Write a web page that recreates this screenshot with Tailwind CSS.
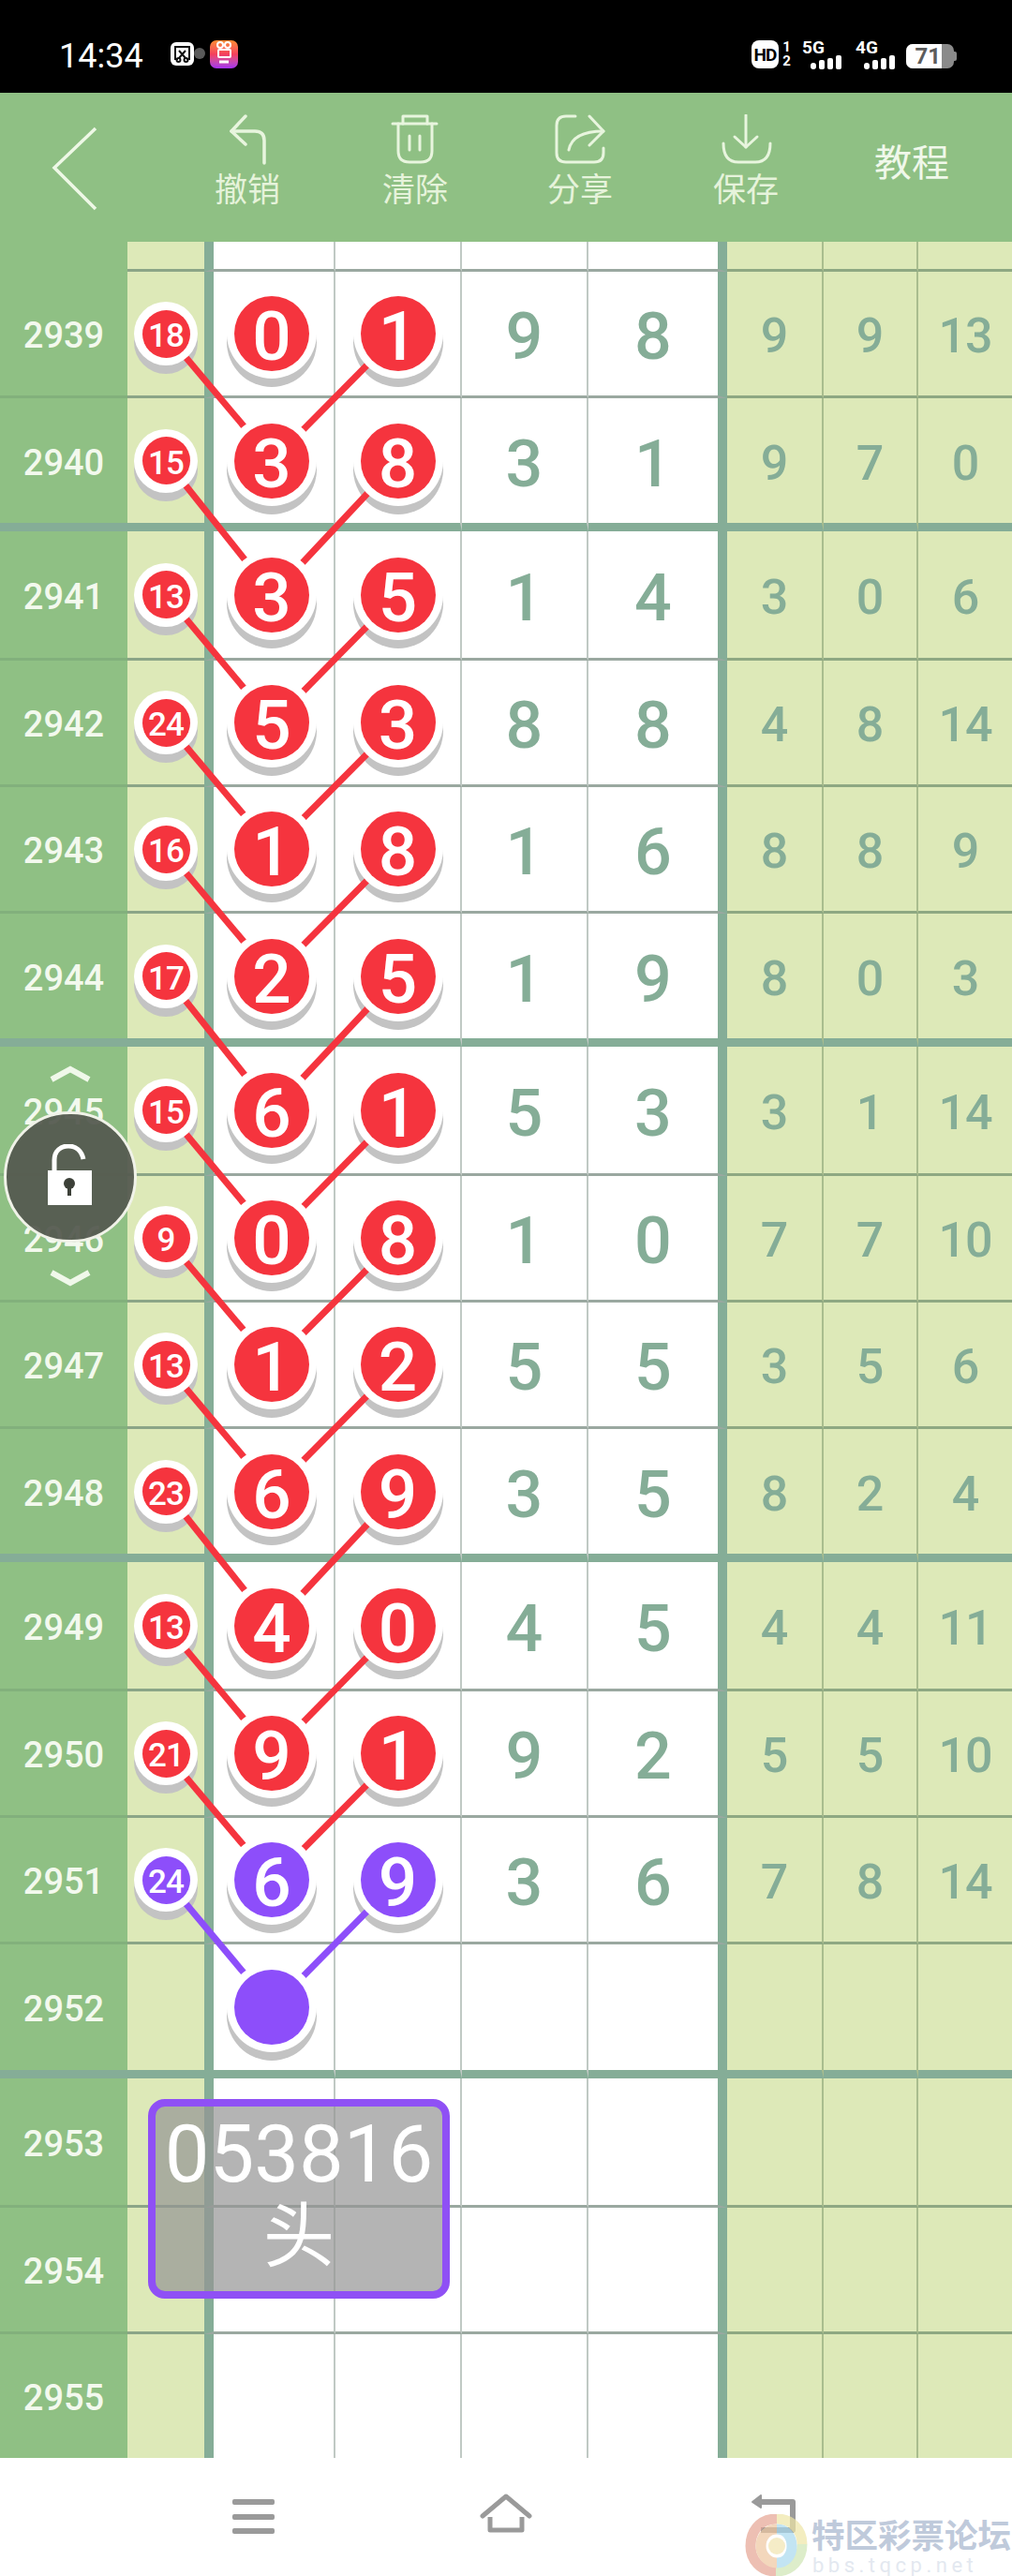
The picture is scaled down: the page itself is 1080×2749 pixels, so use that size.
<!DOCTYPE html>
<html lang="zh">
<head>
  <meta charset="UTF-8" />
  <meta name="viewport" content="width=device-width, initial-scale=1.0"/>
  <title>走势图</title>
  <script src="https://cdn.jsdelivr.net/npm/@tailwindcss/browser@4"></script>
</head>
<body class="bg-white">
<div class="relative w-[1080px] h-[2749px] overflow-hidden bg-white font-['Roboto','Noto_Sans_CJK_SC',sans-serif]">

  <!-- status bar -->
  <div class="flex h-[99px] items-start bg-black text-white">
    <div class="ml-[63px] mt-[39px] w-[119px] text-[36px] leading-[42px]">14:34</div>
    <div class="mt-[45px] flex h-[25px] w-[25px] items-center justify-center rounded-[6px] bg-white">
      <svg width="19" height="19" viewBox="0 0 19 19" fill="none" stroke="#111" stroke-width="2"><path d="M5 15H2V2h15v13h-3"/><path d="M6 6l7 8M13 6l-7 8"/><circle cx="5.500" cy="16" r="2"/><circle cx="13.500" cy="16" r="2"/></svg>
    </div>
    <div class="mt-[51px] h-[12px] w-[12px] rounded-full bg-[#5a5a5a]"></div>
    <div class="ml-[5px] mt-[43px] flex h-[30px] w-[30px] items-start justify-center rounded-[7px] bg-gradient-to-b from-[#fb8a2e] via-[#f43e5c] to-[#a52cf0]">
      <svg width="22" height="26" viewBox="0 0 22 26" fill="none" stroke="#fff" stroke-width="2"><circle cx="7" cy="5" r="3"/><circle cx="15" cy="5" r="3"/><rect x="5" y="10" width="13" height="8" rx="1"/><path d="M6 23h10" stroke-width="3"/></svg>
    </div>

    <div class="ml-[548px] mt-[43px] flex h-[30px] w-[29px] items-center justify-center rounded-[8px] bg-white text-[19px] font-bold leading-none tracking-[-1px] text-black">HD</div>
    <div class="ml-[3px] mt-[43px] flex w-[11px] flex-col items-center text-[15px] font-bold leading-[15px]"><span>1</span><span>2</span></div>

    <div class="ml-[11px] mt-[42px] w-[44px]">
      <div class="text-[19px] font-bold leading-[17px]">5G</div>
      <div class="flex h-[15px] items-end gap-[3px] pl-[9px]">
        <i class="h-[7px] w-[6px] rounded-[3px] bg-white"></i><i class="h-[10px] w-[6px] rounded-[2px] bg-white"></i><i class="h-[12px] w-[6px] rounded-[2px] bg-white"></i><i class="h-[15px] w-[6px] rounded-[2px] bg-white"></i>
      </div>
    </div>
    <div class="ml-[13px] mt-[42px] w-[46px]">
      <div class="text-[19px] font-bold leading-[17px]">4G</div>
      <div class="flex h-[15px] items-end gap-[3px] pl-[9px]">
        <i class="h-[7px] w-[6px] rounded-[3px] bg-white"></i><i class="h-[10px] w-[6px] rounded-[2px] bg-white"></i><i class="h-[12px] w-[6px] rounded-[2px] bg-white"></i><i class="h-[15px] w-[6px] rounded-[2px] bg-white"></i>
      </div>
    </div>
    <div class="ml-[8px] mt-[47px] flex h-[26px] w-[51px] overflow-hidden rounded-[7px] bg-[#8a8a8a]">
      <div class="flex w-[38px] items-center justify-end bg-white pr-px text-[24px] font-bold leading-none text-[#5c5c5c]">71</div>
    </div>
    <div class="mt-[55px] h-[10px] w-[3px] rounded-r-[2px] bg-[#8a8a8a]"></div>
  </div>

  <!-- header -->
  <div class="flex h-[159px] bg-[#8fc084] text-[#e6f3db]">
    <div class="w-[176px] pl-[54px] pt-[35px]">
      <svg width="52" height="92" viewBox="0 0 52 92" fill="none" stroke="#eef8e6" stroke-width="3.500"><path d="M48 3L4 45l44 44"/></svg>
    </div>
    <div class="flex w-[176px] flex-col items-center pt-[23px]">
      <svg width="60" height="54" viewBox="0 0 60 54" fill="none" stroke="#e8f5de" stroke-width="3.500" stroke-linecap="round" stroke-linejoin="round"><path d="M28 2L13 18l15 14"/><path d="M13 18h25q10 0 10 10v24"/></svg>
      <div class="mt-[8px] text-[35px] font-normal leading-[40px]">撤销</div>
    </div>
    <div class="flex w-[182px] flex-col items-center pt-[23px]">
      <svg width="60" height="54" viewBox="0 0 60 54" fill="none" stroke="#e8f5de" stroke-width="3" stroke-linecap="round" stroke-linejoin="round"><path d="M6 10h47"/><path d="M17 10V2h26v8"/><path d="M12 10v29q0 12 12 12h12q12 0 12-12V10"/><path d="M24 23v15M35 23v15"/></svg>
      <div class="mt-[8px] text-[35px] font-normal leading-[40px]">清除</div>
    </div>
    <div class="flex w-[170px] flex-col items-center pt-[23px]">
      <svg width="60" height="54" viewBox="0 0 60 54" fill="none" stroke="#e8f5de" stroke-width="3" stroke-linecap="round" stroke-linejoin="round"><path d="M25 2H15Q5 2 5 12v29q0 10 10 10h30q10 0 10-10v-5"/><path d="M18 38Q22 18 55 18"/><path d="M40 2l15 16-15 15"/></svg>
      <div class="mt-[8px] text-[35px] font-normal leading-[40px]">分享</div>
    </div>
    <div class="flex w-[184px] flex-col items-center pt-[23px]">
      <svg width="60" height="54" viewBox="0 0 60 54" fill="none" stroke="#e8f5de" stroke-width="3" stroke-linecap="round" stroke-linejoin="round"><path d="M30 1v34"/><path d="M18 24l12 11 12-11"/><path d="M6 31q0 20 16 20h18q16 0 16-20"/></svg>
      <div class="mt-[8px] text-[35px] font-normal leading-[40px]">保存</div>
    </div>
    <div class="w-[170px] pt-[52px] text-center text-[40px] font-normal leading-[48px] text-[#f0f8ea]">教程</div>
  </div>

  <!-- chart table, rows are added by the script -->
  <div id="chart" class="relative"></div>

  <!-- result card -->
  <div class="absolute left-[158px] top-[2240px] z-[5] flex h-[213px] w-[322px] flex-col items-center rounded-[18px] border-[8px] border-[#8f50f5] bg-[#949494]/70 font-normal text-white">
    <div class="mt-[1px] text-[85px] leading-[100px]">053816</div>
    <div class="-mt-[4px] text-[76px] leading-[84px]">头</div>
  </div>

  <!-- lock button -->
  <div class="absolute left-[4px] top-[1186px] z-[6] flex h-[140px] w-[142px] items-center justify-center rounded-full border-[3px] border-[#f0f2e8] bg-[#555b50]/95">
    <svg class="-mt-[4px]" width="50" height="66" viewBox="0 0 50 66" fill="none"><path d="M8 32V17C8 7 15 2 23 2s14 5 16 14" stroke="#fff" stroke-width="5"/><rect x="1" y="28" width="47" height="37" fill="#fff"/><circle cx="24" cy="42" r="6" fill="#3c4038"/><path d="M24 44v11" stroke="#3c4038" stroke-width="4"/></svg>
  </div>
  <svg class="absolute left-[53px] top-[1137px] z-[6]" width="44" height="18" viewBox="0 0 44 18" fill="none" stroke="#f0f8ea" stroke-width="6"><path d="M2 15L22 4l20 11"/></svg>
  <svg class="absolute left-[53px] top-[1355px] z-[6]" width="44" height="18" viewBox="0 0 44 18" fill="none" stroke="#f0f8ea" stroke-width="6"><path d="M2 3l20 11L42 3"/></svg>

  <!-- bottom navigation -->
  <div class="absolute left-0 top-[2623px] h-[126px] w-[1080px]">
    <div class="absolute left-[248px] top-[44px] flex h-[37px] w-[45px] flex-col justify-between">
      <div class="h-[6px] rounded-[2px] bg-[#9a9a9a]"></div>
      <div class="h-[6px] rounded-[2px] bg-[#9a9a9a]"></div>
      <div class="h-[6px] rounded-[2px] bg-[#9a9a9a]"></div>
    </div>
    <svg class="absolute left-[510px] top-[38px]" width="60" height="44" viewBox="0 0 60 44" fill="none" stroke="#9a9a9a" stroke-width="5" stroke-linecap="round" stroke-linejoin="round"><path d="M5 24L30 3l25 21"/></svg>
    <svg class="absolute left-[510px] top-[38px]" width="60" height="44" viewBox="0 0 60 44" fill="none" stroke="#9a9a9a" stroke-width="5" stroke-linejoin="round"><path d="M13 25v14h34V25"/></svg>
    <svg class="absolute left-[800px] top-[38px]" width="52" height="44" viewBox="0 0 52 44" fill="none" stroke="#9a9a9a" stroke-width="6" stroke-linejoin="round"><path d="M8 9h38v30H12"/><path d="M12 2L3 9l9 6z" fill="#9a9a9a" stroke-width="2"/></svg>

    <!-- watermark -->
    <svg class="absolute left-[795px] top-[60px]" width="68" height="66" viewBox="0 0 68 66" fill="none" opacity="0.7">
      <path d="M34 5C14 5 6 20 6 34s10 27 27 27" stroke="#e6a593" stroke-width="11"/>
      <path d="M34 5c16 0 27 12 27 27" stroke="#efe6a6" stroke-width="11"/>
      <path d="M61 32c0 16-11 29-28 29" stroke="#cfe6b4" stroke-width="11"/>
      <path d="M34 16c-10 0-17 8-17 18s8 18 17 18" stroke="#eec7a0" stroke-width="11"/>
      <path d="M34 16c10 0 16 8 16 18s-6 18-16 18" stroke="#a9d9ee" stroke-width="11"/>
      <circle cx="34" cy="34" r="9" fill="#f1e4b0"/>
    </svg>
    <div class="absolute left-[866px] top-[64px] whitespace-nowrap text-[35.500px] font-bold leading-[40px] text-[#bfcadb]">特区彩票论坛</div>
    <div class="absolute left-[867px] top-[103px] whitespace-nowrap text-[22px] leading-[24px] tracking-[4.500px] text-[#e3e8f0]">bbs.tqcp.net</div>
  </div>
</div>

<script>
  // [period, miss, a, b, c, d, e, f, g]
  const data = [
    [2939, 18, 0, 1, 9, 8, 9, 9, 13],
    [2940, 15, 3, 8, 3, 1, 9, 7, 0],
    [2941, 13, 3, 5, 1, 4, 3, 0, 6],
    [2942, 24, 5, 3, 8, 8, 4, 8, 14],
    [2943, 16, 1, 8, 1, 6, 8, 8, 9],
    [2944, 17, 2, 5, 1, 9, 8, 0, 3],
    [2945, 15, 6, 1, 5, 3, 3, 1, 14],
    [2946, 9, 0, 8, 1, 0, 7, 7, 10],
    [2947, 13, 1, 2, 5, 5, 3, 5, 6],
    [2948, 23, 6, 9, 3, 5, 8, 2, 4],
    [2949, 13, 4, 0, 4, 5, 4, 4, 11],
    [2950, 21, 9, 1, 9, 2, 5, 5, 10],
    [2951, 24, 6, 9, 3, 6, 7, 8, 14],
  ];
  const heights = [135, 142, 138, 135, 135, 142, 138, 135, 135, 142, 138, 135, 135, 143, 138, 135, 132];
  const thickRows = [2940, 2944, 2948, 2952];
  const lastRow = 2955;

  const RED = '#f5343e';
  const PURPLE = '#8d4efa';

  function bigBall(text, purple, shift) {
    const fill = purple ? 'bg-[#8d4efa]' : 'bg-[#f5343e]';
    return `<div class="relative h-[96px] w-[96px] ${shift}">
      <div class="absolute inset-0 z-[1] translate-y-[9px] rounded-full bg-[#c3c3c3]"></div>
      <div class="absolute inset-0 z-[3] flex items-center justify-center rounded-full bg-white">
        <div class="flex h-[80px] w-[80px] items-center justify-center rounded-full ${fill} pt-[7px] text-[73px] font-medium leading-none text-white">${text}</div>
      </div>
    </div>`;
  }

  function smallBall(text, purple) {
    const fill = purple ? 'bg-[#8d4efa]' : 'bg-[#f5343e]';
    return `<div class="relative h-[68px] w-[68px]">
      <div class="absolute inset-0 z-[1] translate-y-[9px] rounded-full bg-[#c3c3c3]"></div>
      <div class="absolute inset-0 z-[3] flex items-center justify-center rounded-full bg-white">
        <div class="flex h-[51px] w-[51px] items-center justify-center rounded-full ${fill} pt-[5px] text-[35px] font-medium leading-none tracking-[-1px] text-white">${text}</div>
      </div>
    </div>`;
  }

  let html = '';
  let rowTop = 0;
  let lines = '';
  const points = [];

  function addRow(period, h, d) {
    const thick = thickRows.includes(period);
    const line = thick ? 9 : 3;
    let b0 = thick ? 'border-b-[9px] border-b-[#85ad97]' : 'border-b-[3px] border-b-[#82b07c]';
    let b1 = thick ? 'border-b-[9px] border-b-[#85ad97]' : 'border-b-[3px] border-b-[#8ba587]';
    let b2 = thick ? 'border-b-[9px] border-b-[#85ad97]' : 'border-b-[3px] border-b-[#9aa8a0]';
    let b3 = thick ? 'border-b-[9px] border-b-[#85ad97]' : 'border-b-[3px] border-b-[#8ea882]';
    if (period === lastRow) b0 = b1 = b2 = b3 = '';
    const purple = period === 2951;
    html += `<div class="grid grid-cols-[136px_82px_140px_135px_135px_148px_103px_101px_100px]" style="height:${h}px">
      <div class="flex items-center justify-center bg-[#8fc084] pt-[4px] text-[38px] font-medium leading-none text-[#f3f9ee] ${b0}">${period || ''}</div>
      <div class="flex items-center justify-center bg-[#dde9b8] ${b1}">${d ? smallBall(d[1], purple) : ''}</div>
      <div class="flex items-center justify-center border-l-[10px] border-r-2 border-l-[#85ad97] border-r-[#c0c9c4] bg-white ${b2}">${d ? bigBall(d[2], purple, 'mr-[4px]') : ''}${period === 2952 ? bigBall('', true, 'mr-[4px]') : ''}</div>
      <div class="flex items-center justify-center border-r-2 border-r-[#c0c9c4] bg-white ${b2}">${d ? bigBall(d[3], purple, '') : ''}</div>
      <div class="flex items-center justify-center border-r-2 border-r-[#c0c9c4] bg-white pt-[6px] text-[70px] font-medium leading-none text-[#85ad97] ${b2}">${d ? d[4] : ''}</div>
      <div class="flex items-center justify-center border-r-[10px] border-r-[#85ad97] bg-white pt-[6px] text-[70px] font-medium leading-none text-[#85ad97] ${b2}">${d ? d[5] : ''}</div>
      <div class="flex items-center justify-center border-r-2 border-r-[#a9bd8e] bg-[#dde9b8] pt-[6px] text-[52px] font-medium leading-none text-[#85ad97] ${b3}">${d ? d[6] : ''}</div>
      <div class="flex items-center justify-center border-r-2 border-r-[#a9bd8e] bg-[#dde9b8] pt-[6px] text-[52px] font-medium leading-none text-[#85ad97] ${b3}">${d ? d[7] : ''}</div>
      <div class="flex items-center justify-center bg-[#dde9b8] pt-[6px] text-[52px] font-medium leading-none tracking-[-1px] text-[#85ad97] ${b3}">${d ? d[8] : ''}</div>
    </div>`;
    points.push(rowTop + (h - line) / 2);
    rowTop += h;
  }

  // top sliver of the scrolled table
  html += `<div class="grid h-[32px] grid-cols-[136px_82px_140px_135px_135px_148px_103px_101px_100px]">
    <div class="bg-[#8fc084]"></div>
    <div class="border-b-[3px] border-b-[#8ba587] bg-[#dde9b8]"></div>
    <div class="border-b-[3px] border-l-[10px] border-r-2 border-b-[#9aa8a0] border-l-[#85ad97] border-r-[#c0c9c4] bg-white"></div>
    <div class="border-b-[3px] border-r-2 border-b-[#9aa8a0] border-r-[#c0c9c4] bg-white"></div>
    <div class="border-b-[3px] border-r-2 border-b-[#9aa8a0] border-r-[#c0c9c4] bg-white"></div>
    <div class="border-b-[3px] border-r-[10px] border-b-[#9aa8a0] border-r-[#85ad97] bg-white"></div>
    <div class="border-b-[3px] border-r-2 border-b-[#8ea882] border-r-[#a9bd8e] bg-[#dde9b8]"></div>
    <div class="border-b-[3px] border-r-2 border-b-[#8ea882] border-r-[#a9bd8e] bg-[#dde9b8]"></div>
    <div class="border-b-[3px] border-b-[#8ea882] bg-[#dde9b8]"></div>
  </div>`;
  rowTop = 32;

  heights.forEach((h, i) => addRow(2939 + i, h, data[i]));

  // connecting lines between a row's balls and the next row's first ball
  for (let i = 0; i < data.length; i++) {
    const color = i === data.length - 1 ? PURPLE : RED;
    const y1 = points[i];
    const y2 = points[i + 1];
    lines += `<line x1="177" y1="${y1}" x2="291" y2="${y2}" stroke="${color}" stroke-width="7"/>`;
    lines += `<line x1="425" y1="${y1}" x2="291" y2="${y2}" stroke="${color}" stroke-width="7"/>`;
  }

  document.getElementById('chart').innerHTML = html +
    `<svg class="pointer-events-none absolute left-0 top-0 z-[2]" width="1080" height="${rowTop}">${lines}</svg>`;
</script>
</body>
</html>
